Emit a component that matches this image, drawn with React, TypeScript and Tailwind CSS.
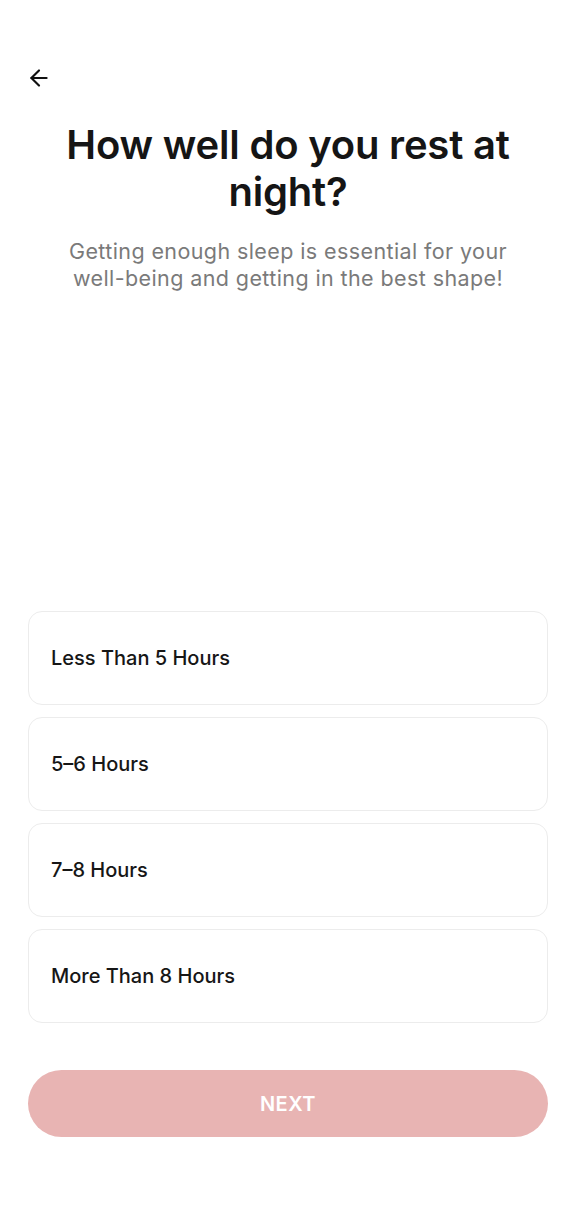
import { ArrowLeft } from "lucide-react";

const options = ["Less Than 5 Hours", "5–6 Hours", "7–8 Hours", "More Than 8 Hours"];

export default function App() {
  return (
    <div className="w-[576px] h-[1216px] bg-white flex flex-col px-7 font-['Inter',sans-serif]">
      {/* Back arrow */}
      <div className="pt-[65px] h-[90px]">
        <ArrowLeft className="w-[26px] h-[26px] text-[#111] -ml-[2px]" strokeWidth={2} />
      </div>

      {/* Heading */}
      <h1 className="mt-[31px] text-center text-[40px] leading-[47px] font-semibold text-[#151515] tracking-[-0.2px] px-4">
        How well do you rest at night?
      </h1>
      <p className="mt-[23px] text-center text-[21.5px] leading-[27px] text-[#7a7a7a] tracking-[0.4px] px-4">
        Getting enough sleep is essential for your well-being and getting in the best shape!
      </p>

      {/* Options */}
      <div className="mt-[319px] flex flex-col gap-3">
        {options.map((label) => (
          <div
            key={label}
            className="h-[94px] rounded-[14px] border border-[#ececec] flex items-center px-[22px] text-[20px] font-medium text-[#161616]"
          >
            {label}
          </div>
        ))}
      </div>

      {/* Next button */}
      <button className="mt-[47px] h-[67px] rounded-full bg-[#e8b4b3] text-white text-[20px] font-semibold tracking-[0.5px]">
        NEXT
      </button>
    </div>
  );
}
